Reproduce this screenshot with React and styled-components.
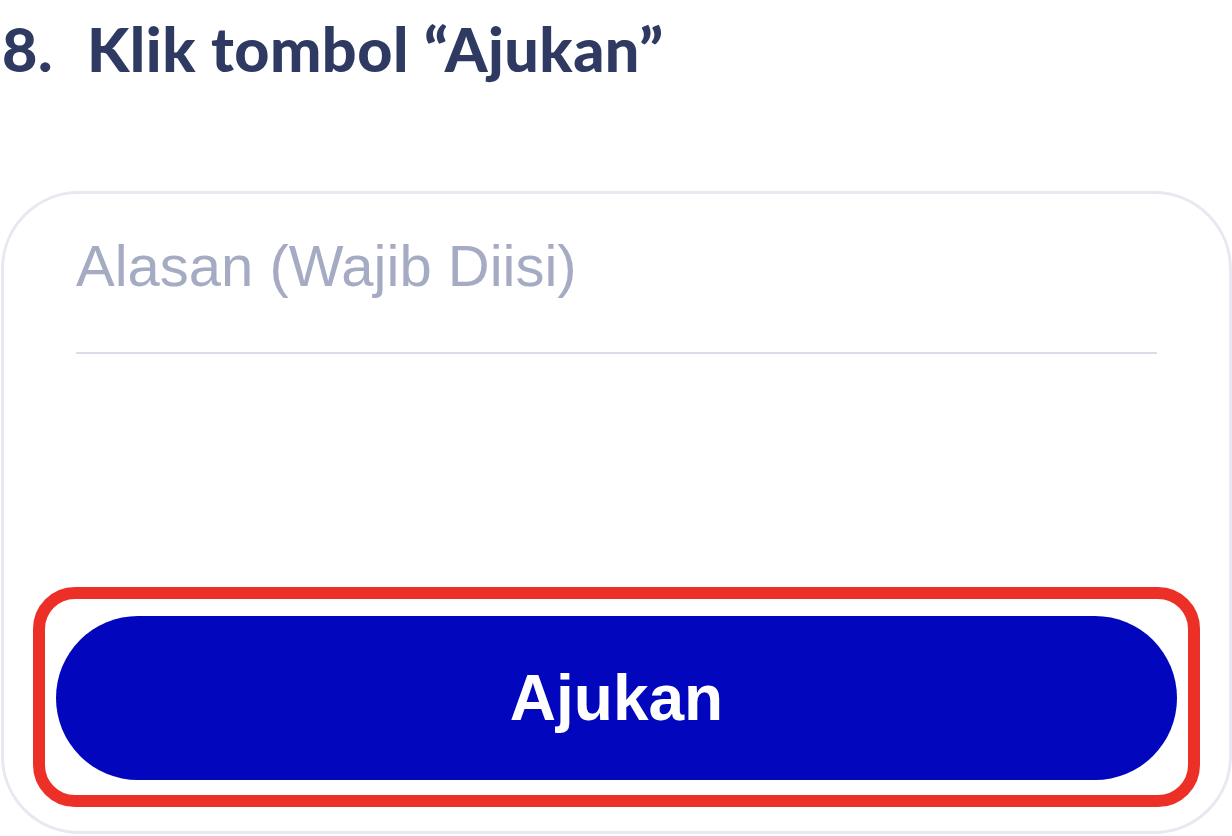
import React from "react";
import styled, { createGlobalStyle } from "styled-components";

const GlobalStyle = createGlobalStyle`
  html, body {
    margin: 0;
    padding: 0;
    background: #ffffff;
  }
  body {
    font-family: "Liberation Sans", Arial, sans-serif;
  }
`;

const Page = styled.div`
  width: 1232px;
  padding-top: 12px;
  box-sizing: border-box;
`;

const Heading = styled.h2`
  display: flex;
  gap: 34px;
  margin: 0 0 ${(p) => p.spacing}px 2px;
  font-family: Lato, "Open Sans", sans-serif;
  font-weight: 900;
  font-size: 61px;
  line-height: 1.2;
  letter-spacing: 0.5px;
  color: #2e3a62;
`;

const Card = styled.div`
  width: 1231px;
  box-sizing: border-box;
  margin-left: 1px;
  border: 3px solid #e7e8f0;
  border-radius: 78px;
  padding: 39px 52px 51px;
  background: #fff;
`;

const Field = styled.div`
  margin: 0 20px;
  padding-bottom: 53px;
  border-bottom: 2px solid #dcdce6;
`;

const Placeholder = styled.span`
  display: block;
  font-size: 58px;
  line-height: 66px;
  color: #a5abc2;
`;

const ButtonSlot = styled.div`
  position: relative;
  margin-top: 262px;
`;

const Highlight = styled.div`
  position: absolute;
  top: -29px;
  bottom: -27px;
  left: -23px;
  right: -23px;
  border: 12px solid #ec3027;
  border-radius: 42px;
  pointer-events: none;
`;

const SubmitButton = styled.button`
  display: flex;
  align-items: center;
  justify-content: center;
  width: 100%;
  height: 164px;
  border: 0;
  border-radius: 82px;
  background: #0206bc;
  color: #fff;
  font-family: "Liberation Sans", Arial, sans-serif;
  font-weight: 700;
  font-size: 64px;
  padding: 0;
`;

export default function App() {
  return (
    <>
      <GlobalStyle />
      <Page>
        <Heading spacing={106}>
          <span>8.</span>
          <span>Klik tombol “Ajukan”</span>
        </Heading>
        <Card>
          <Field>
            <Placeholder>Alasan (Wajib Diisi)</Placeholder>
          </Field>
          <ButtonSlot>
            <Highlight />
            <SubmitButton>Ajukan</SubmitButton>
          </ButtonSlot>
        </Card>
      </Page>
    </>
  );
}
